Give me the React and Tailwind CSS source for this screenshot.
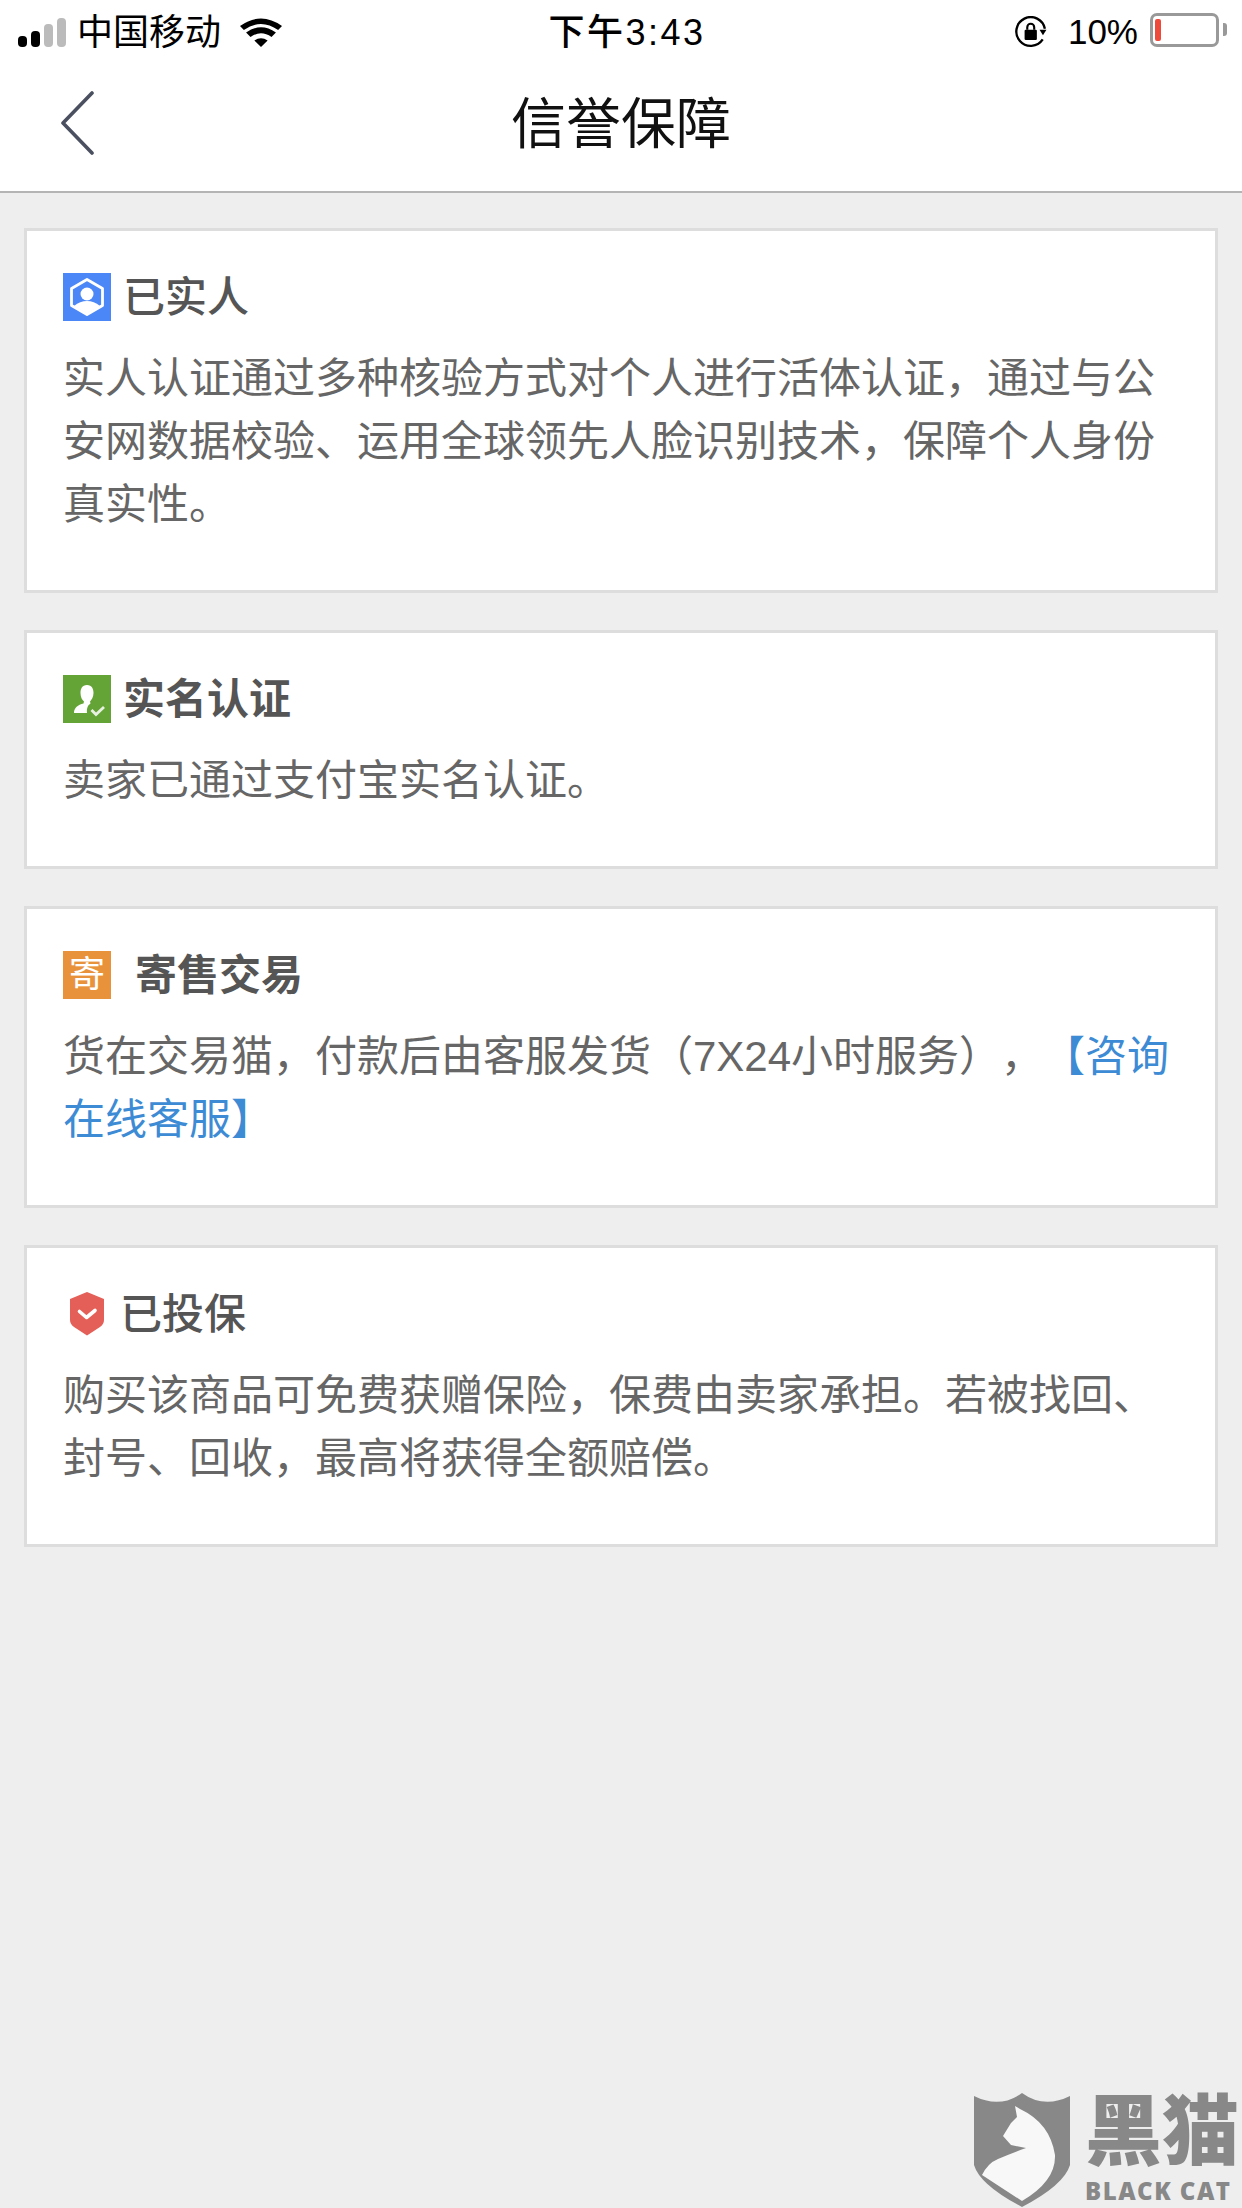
import React from 'react';

const cards = [
  {
    icon: <RealPersonIcon />,
    title: '已实人',
    titleClass: 'font-medium ml-[12px]',
    body: '实人认证通过多种核验方式对个人进行活体认证，通过与公安网数据校验、运用全球领先人脸识别技术，保障个人身份真实性。',
  },
  {
    icon: <RealNameIcon />,
    title: '实名认证',
    titleClass: 'font-bold ml-[12px]',
    body: '卖家已通过支付宝实名认证。',
  },
  {
    icon: <div className="w-12 h-12 bg-[#e8923c] text-white text-[36px] leading-[48px] text-center">寄</div>,
    title: '寄售交易',
    titleClass: 'font-bold ml-[24px]',
    body: (
      <>
        货在交易猫，付款后由客服发货（7X24小时服务），<span className="text-[#3d8bd4]">【咨询在线客服】</span>
      </>
    ),
  },
  {
    icon: <ShieldIcon />,
    title: '已投保',
    titleClass: 'font-medium ml-[9px]',
    body: '购买该商品可免费获赠保险，保费由卖家承担。若被找回、封号、回收，最高将获得全额赔偿。',
  },
];

function RealPersonIcon() {
  return (
    <svg width="48" height="48" viewBox="0 0 48 48">
      <rect width="48" height="48" fill="#4b87f7" />
      <path d="M24 6.5 L39.5 15.5 V32.5 L24 41.5 L8.5 32.5 V15.5 Z" fill="none" stroke="#fff" strokeWidth="2.8" strokeLinejoin="round" />
      <circle cx="24" cy="21" r="6.5" fill="#fff" />
      <path d="M11 33 Q17 28 24 28 Q31 28 37 33 L24 40.5 Z" fill="#fff" />
    </svg>
  );
}

function RealNameIcon() {
  return (
    <svg width="48" height="48" viewBox="0 0 48 48">
      <rect width="48" height="48" fill="#64a436" />
      <path d="M24 10 C29 10 30.5 14 30.5 18 C30.5 22 28.5 25 27 26.5 L27.5 28.5 C25 30 23.5 33 24 38 H11 C11 32.5 15 30 20.5 28.5 L21 26.5 C19 25 17.5 22 17.5 18 C17.5 14 19 10 24 10 Z" fill="#fff" />
      <path d="M28.5 35 L33 39.5 L41 32" fill="none" stroke="#fff" strokeWidth="2.8" opacity="0.85" />
    </svg>
  );
}

function ShieldIcon() {
  return (
    <svg width="48" height="48" viewBox="0 0 48 48">
      <path d="M24 2 L41 9 V30 Q41 34 37 37 L24 45.5 L11 37 Q7 34 7 30 V9 Z" fill="#e45f58" />
      <path d="M16.5 21.5 L23.5 27.5 L32 20.5" fill="none" stroke="#fff" strokeWidth="3.6" strokeLinecap="round" strokeLinejoin="round" />
    </svg>
  );
}

function StatusBar() {
  return (
    <div className="relative h-[60px] grid grid-cols-[1fr_auto_1fr] items-center text-black text-[36px] leading-[60px]">
      <div className="flex items-center">
        <div className="flex items-end gap-[4px] ml-[18px] h-[30px]">
          <span className="w-[9px] h-[11px] rounded-[4px] bg-black" />
          <span className="w-[9px] h-[16px] rounded-[4px] bg-black" />
          <span className="w-[9px] h-[23px] rounded-[4px] bg-[#bbb]" />
          <span className="w-[9px] h-[29px] rounded-[4px] bg-[#bbb]" />
        </div>
        <span className="ml-[11px] mt-[3px]">中国移动</span>
        <svg className="ml-[19px]" width="42" height="30" viewBox="0 0 38 30" preserveAspectRatio="none">
          <path d="M19 30 L13 23.5 Q19 19 25 23.5 Z M9.5 20 L5.5 15.5 Q19 5 32.5 15.5 L28.5 20 Q19 12.5 9.5 20 Z M3.5 13 L0 9 Q19 -6 38 9 L34.5 13 Q19 1 3.5 13 Z" fill="#000" />
        </svg>
      </div>
      <div className="ml-[12px] mt-[2px] tracking-[2.5px] font-medium">下午3:43</div>
      <div className="flex items-center justify-end mr-[104px]">
        <svg width="34" height="32" viewBox="0 0 30 30" className="mr-[20px]">
          <path d="M26 22 A13.5 13.5 0 1 1 28 12" fill="none" stroke="#000" strokeWidth="2.2" />
          <path d="M23 13 L29.5 13 L26.2 18 Z" fill="#000" />
          <rect x="9" y="13" width="11.5" height="9.5" rx="1" fill="#000" />
          <path d="M11.5 13 V10.5 A3.2 3.2 0 0 1 18 10.5 V13" fill="none" stroke="#000" strokeWidth="2" />
        </svg>
        <span className="text-[35px]">10%</span>
      </div>
      <div className="absolute right-[23px] top-[13px] w-[69px] h-[34px] border-[3px] border-[#999] rounded-[7px] px-[2px] py-[3px]">
        <div className="w-[6px] h-full bg-[#ee4a3c] rounded-[2px]" />
      </div>
      <div className="absolute right-[15px] top-[23px] w-[4px] h-[13px] bg-[#999] rounded-r-[3px]" />
    </div>
  );
}

function Card({ icon, title, titleClass, body }) {
  return (
    <div className="bg-white border-[3px] border-[#ddd] pt-[42px] pl-[36px] pr-[30px] pb-[54px]">
      <div className="flex items-center h-12">
        {icon}
        <h2 className={'mt-[2px] text-[42px] leading-[48px] text-[#555] ' + titleClass}>{title}</h2>
      </div>
      <p className="mt-[26px] text-[42px] leading-[63px] text-[#666] [text-spacing-trim:space-all]">{body}</p>
    </div>
  );
}

export default function App() {
  return (
    <div lang="zh-CN" className="relative w-[1242px] h-[2208px] overflow-hidden bg-[#eee] font-['Liberation_Sans','Noto_Sans_CJK_SC',sans-serif]">
      <header className="bg-white border-b-2 border-[#b4b4b4] h-[193px]">
        <StatusBar />
        <div className="relative h-[131px] flex items-center justify-center pb-[3px]">
          <svg className="absolute left-[60px] top-[31px]" width="36" height="64" viewBox="0 0 36 64">
            <path d="M32 2 L3 32 L32 62" fill="none" stroke="#4a5060" strokeWidth="3.6" strokeLinecap="round" strokeLinejoin="round" />
          </svg>
          <h1 className="text-[55px] leading-none text-[#111]">信誉保障</h1>
        </div>
      </header>

      <main className="px-6 pt-[35px] flex flex-col gap-[37px]">
        {cards.map((card) => (
          <Card key={card.title} {...card} />
        ))}
      </main>

      {/* watermark */}
      <div className="absolute left-[974px] top-[2093px] flex items-start">
        <svg width="96" height="114" viewBox="0 0 96 114">
          <path d="M0 3 Q26 16 48 0 Q70 16 96 3 V72 Q90 92 48 114 Q6 92 0 72 Z" fill="#888" />
          <path d="M41 13 L46 16 Q76 30 81 62 Q82 88 48 108 L8 82 Q14 70 24 66 Q38 60 52 55 L37 52 L29 43 L37 30 L43 24 Z" fill="#f8f8f8" />
        </svg>
        <div className="ml-[15px] w-[155px] text-[#888] font-black">
          <div className="text-[77px] leading-[78px] whitespace-nowrap">黑猫</div>
          <div className="text-[24px] leading-[26px] mt-[7px] tracking-[1.5px] whitespace-nowrap font-['Open_Sans',sans-serif] font-extrabold">BLACK CAT</div>
        </div>
      </div>
    </div>
  );
}
